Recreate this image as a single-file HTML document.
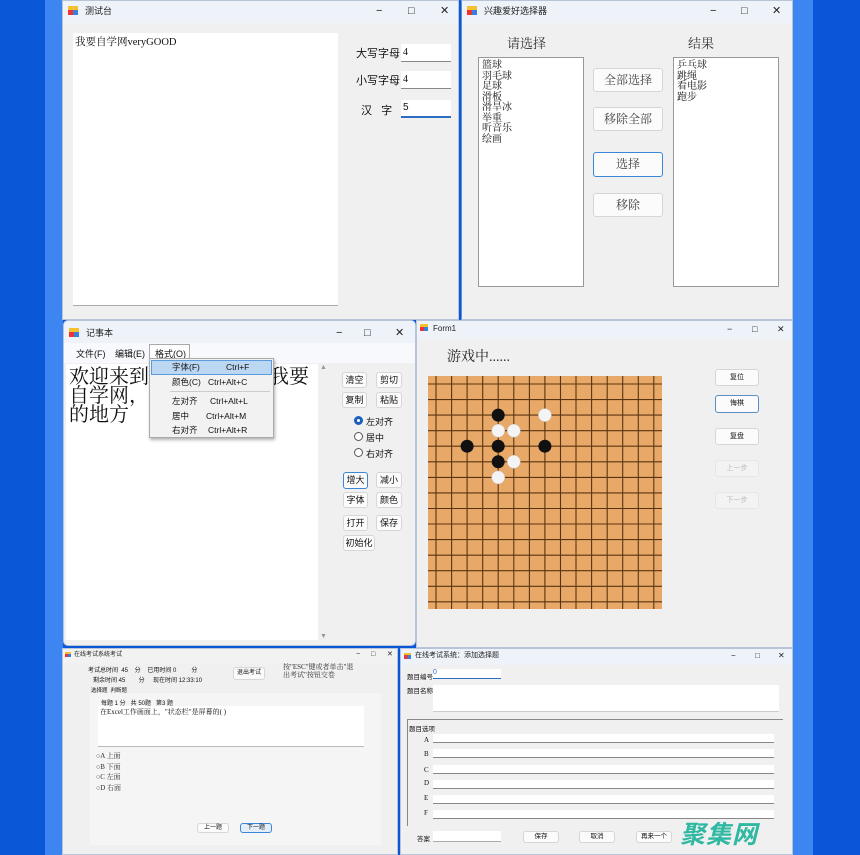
<!DOCTYPE html>
<html><head><meta charset="utf-8"><style>
*{box-sizing:border-box;margin:0;padding:0}
body{width:860px;height:855px;position:relative;overflow:hidden;background:#0a58d8;font-family:"Liberation Sans","Noto Sans CJK SC",sans-serif;font-size:11px;color:#111}
.a{position:absolute}
.win{position:absolute;background:#f0f0f0;border:1px solid #b8c4d8;overflow:hidden}
.tb{position:absolute;left:0;right:0;top:0;height:22px;background:#eef2f9;font-size:9px;line-height:20px;padding-left:22px;color:#222}
.ic{position:absolute;left:5px;top:5px;width:10px;height:9px;background:linear-gradient(90deg,#e33 0 50%,#3a7fe0 50%);border-top:4px solid #f5c030}
.ctl{position:absolute;top:0;font-size:11px;line-height:20px;color:#222}
.serif{font-family:"Liberation Serif","Noto Serif CJK SC",serif}
.wb{position:absolute;background:#fff}
.btn{position:absolute;background:#fbfbfb;border:1px solid #d6d6d6;border-radius:3px;text-align:center;font-size:9px}
.line{position:absolute;background:#fff;border-bottom:1px solid #888}
</style></head><body>
<div class="a" style="left:0;top:0;width:45px;height:855px;background:#0a58d8"></div>
<div class="a" style="left:45px;top:0;width:18px;height:855px;background:#3d86f2"></div>
<div class="a" style="left:793px;top:0;width:20px;height:855px;background:#3d86f2"></div>
<div class="a" style="left:813px;top:0;width:47px;height:855px;background:#0a55d8"></div>

<!-- Window 1 -->
<div class="win" style="left:62px;top:0;width:397px;height:320px">
 <div class="tb"><div class="ic"></div>测试台<span class="ctl" style="left:313px">−</span><span class="ctl" style="left:345px">□</span><span class="ctl" style="left:377px">✕</span></div>
 <div class="wb serif" style="left:10px;top:32px;width:265px;height:273px;border-bottom:1px solid #aaa;font-size:10.5px;padding:1px 2px">我要自学网veryGOOD</div>
 <div class="a" style="left:293px;top:44px;font-size:11px">大写字母</div>
 <div class="line serif" style="left:338px;top:43px;width:50px;height:18px;padding:3px 0 0 2px;font-size:10px">4</div>
 <div class="a" style="left:293px;top:71px;font-size:11px">小写字母</div>
 <div class="line serif" style="left:338px;top:70px;width:50px;height:18px;padding:3px 0 0 2px;font-size:10px">4</div>
 <div class="a" style="left:298px;top:101px;font-size:11px">汉&nbsp;&nbsp;&nbsp;字</div>
 <div class="line" style="left:338px;top:99px;width:50px;height:18px;padding:2px 0 0 2px;font-size:10px;border-bottom:2px solid #2b6cc4">5</div>
</div>

<!-- Window 2 -->
<div class="win" style="left:461px;top:0;width:332px;height:320px;border-left:1px solid #5a8ee0">
 <div class="tb"><div class="ic"></div>兴趣爱好选择器<span class="ctl" style="left:248px">−</span><span class="ctl" style="left:279px">□</span><span class="ctl" style="left:310px">✕</span></div>
 <div class="a serif" style="left:45px;top:32px;font-size:13px;color:#333">请选择</div>
 <div class="a serif" style="left:226px;top:32px;font-size:13px;color:#333">结果</div>
 <div class="wb serif" style="left:16px;top:56px;width:106px;height:230px;border:1px solid #999;font-size:10px;line-height:10.5px;padding:3px">篮球<br>羽毛球<br>足球<br>滑板<br>滑旱冰<br>举重<br>听音乐<br>绘画</div>
 <div class="wb serif" style="left:211px;top:56px;width:106px;height:230px;border:1px solid #999;font-size:10px;line-height:10.5px;padding:3px">乒乓球<br>跳绳<br>看电影<br>跑步</div>
 <div class="btn serif" style="left:131px;top:67px;width:70px;height:24px;line-height:22px;font-size:12px;color:#444">全部选择</div>
 <div class="btn serif" style="left:131px;top:106px;width:70px;height:24px;line-height:22px;font-size:12px;color:#444">移除全部</div>
 <div class="btn serif" style="left:131px;top:151px;width:70px;height:25px;line-height:23px;font-size:12px;color:#444;border:1px solid #3a86d8">选择</div>
 <div class="btn serif" style="left:131px;top:192px;width:70px;height:24px;line-height:22px;font-size:12px;color:#444">移除</div>
</div>

<!-- Notepad -->
<div class="win" style="left:63px;top:320px;width:353px;height:326px;border-radius:5px">
 <div class="tb" style="height:24px;line-height:24px"><div class="ic" style="top:7px"></div>记事本<span class="ctl" style="left:272px;line-height:24px">−</span><span class="ctl" style="left:300px;line-height:24px">□</span><span class="ctl" style="left:331px;line-height:24px">✕</span></div>
 <div class="a" style="left:0;top:22px;width:353px;height:20px;background:#f7f9fc"></div>
 <div class="a" style="left:12px;top:26px;font-size:9px">文件(F)</div>
 <div class="a" style="left:51px;top:26px;font-size:9px">编辑(E)</div>
 <div class="a" style="left:85px;top:23px;width:41px;height:16px;border:1px solid #aaa;background:#fff;font-size:9px;padding:2px 0 0 5px">格式(O)</div>
 <div class="wb serif" style="left:2px;top:43px;width:252px;height:276px;font-size:20px;line-height:19px;padding:4px 3px">欢迎来到我要自学网，我要<br>自学网，学习玩电<br>的地方</div>
 <div class="a" style="left:254px;top:43px;width:11px;height:276px;background:#f0f0f0;font-size:7px;color:#999;text-align:center">▲<div style="position:absolute;bottom:0;width:11px">▼</div></div>
 <div class="a" style="left:85px;top:37px;width:125px;height:80px;background:#f2f2f2;border:1px solid #aaa;box-shadow:1px 2px 3px rgba(0,0,0,.3);font-size:8.5px;line-height:10px">
  <div class="a" style="left:1px;top:1px;width:121px;height:15px;background:#bcd7f2;border:1px solid #5a9ade"></div>
  <div class="a" style="left:22px;top:3px">字体(F)</div><div class="a" style="left:76px;top:3px">Ctrl+F</div>
  <div class="a" style="left:22px;top:18px">颜色(C)</div><div class="a" style="left:58px;top:18px">Ctrl+Alt+C</div>
  <div class="a" style="left:20px;top:32px;width:100px;height:1px;background:#ccc"></div>
  <div class="a" style="left:22px;top:37px">左对齐</div><div class="a" style="left:60px;top:37px">Ctrl+Alt+L</div>
  <div class="a" style="left:22px;top:52px">居中</div><div class="a" style="left:56px;top:52px">Ctrl+Alt+M</div>
  <div class="a" style="left:22px;top:66px">右对齐</div><div class="a" style="left:58px;top:66px">Ctrl+Alt+R</div>
 </div>
 <div class="btn" style="left:278px;top:51px;width:25px;height:16px;line-height:14px">清空</div>
 <div class="btn" style="left:312px;top:51px;width:26px;height:16px;line-height:14px">剪切</div>
 <div class="btn" style="left:278px;top:71px;width:25px;height:16px;line-height:14px">复制</div>
 <div class="btn" style="left:312px;top:71px;width:26px;height:16px;line-height:14px">粘贴</div>
 <div class="a" style="left:290px;top:95px;width:9px;height:9px;border-radius:50%;border:3px solid #1a5fc0;background:#fff"></div><div class="a" style="left:302px;top:94px;font-size:9px">左对齐</div>
 <div class="a" style="left:290px;top:111px;width:9px;height:9px;border-radius:50%;border:1px solid #555;background:#fff"></div><div class="a" style="left:302px;top:110px;font-size:9px">居中</div>
 <div class="a" style="left:290px;top:127px;width:9px;height:9px;border-radius:50%;border:1px solid #555;background:#fff"></div><div class="a" style="left:302px;top:126px;font-size:9px">右对齐</div>
 <div class="btn" style="left:279px;top:151px;width:25px;height:17px;line-height:15px;border-color:#3a86d8">增大</div>
 <div class="btn" style="left:312px;top:151px;width:26px;height:16px;line-height:14px">减小</div>
 <div class="btn" style="left:279px;top:171px;width:25px;height:16px;line-height:14px">字体</div>
 <div class="btn" style="left:312px;top:171px;width:26px;height:16px;line-height:14px">颜色</div>
 <div class="btn" style="left:279px;top:194px;width:25px;height:16px;line-height:14px">打开</div>
 <div class="btn" style="left:312px;top:194px;width:26px;height:16px;line-height:14px">保存</div>
 <div class="btn" style="left:279px;top:214px;width:32px;height:16px;line-height:14px">初始化</div>
</div>

<!-- Form1 -->
<div class="win" style="left:416px;top:320px;width:377px;height:328px">
 <div class="tb" style="height:18px;line-height:16px;font-size:8px;padding-left:16px"><div class="ic" style="left:3px;top:3px;width:8px;height:7px;border-top-width:3px"></div>Form1<span class="ctl" style="left:310px;line-height:16px;font-size:9px">−</span><span class="ctl" style="left:335px;line-height:16px;font-size:9px">□</span><span class="ctl" style="left:360px;line-height:16px;font-size:9px">✕</span></div>
 <div class="a serif" style="left:30px;top:25px;font-size:14px;color:#222">游戏中......</div>
 <svg class="a" style="left:11px;top:55px" width="234" height="233" viewBox="0 0 234 233">
  <rect width="234" height="233" fill="#e8a868"/>
  <g stroke="#5a3410" stroke-width="1.1">
   <line x1="8" y1="0" x2="8" y2="233"/><line x1="23.6" y1="0" x2="23.6" y2="233"/><line x1="39.1" y1="0" x2="39.1" y2="233"/><line x1="54.7" y1="0" x2="54.7" y2="233"/><line x1="70.2" y1="0" x2="70.2" y2="233"/><line x1="85.8" y1="0" x2="85.8" y2="233"/><line x1="101.4" y1="0" x2="101.4" y2="233"/><line x1="116.9" y1="0" x2="116.9" y2="233"/><line x1="132.5" y1="0" x2="132.5" y2="233"/><line x1="148" y1="0" x2="148" y2="233"/><line x1="163.6" y1="0" x2="163.6" y2="233"/><line x1="179.2" y1="0" x2="179.2" y2="233"/><line x1="194.7" y1="0" x2="194.7" y2="233"/><line x1="210.3" y1="0" x2="210.3" y2="233"/><line x1="225.8" y1="0" x2="225.8" y2="233"/>
   <line y1="8" x1="0" y2="8" x2="234"/><line y1="23.6" x1="0" y2="23.6" x2="234"/><line y1="39.1" x1="0" y2="39.1" x2="234"/><line y1="54.7" x1="0" y2="54.7" x2="234"/><line y1="70.2" x1="0" y2="70.2" x2="234"/><line y1="85.8" x1="0" y2="85.8" x2="234"/><line y1="101.4" x1="0" y2="101.4" x2="234"/><line y1="116.9" x1="0" y2="116.9" x2="234"/><line y1="132.5" x1="0" y2="132.5" x2="234"/><line y1="148" x1="0" y2="148" x2="234"/><line y1="163.6" x1="0" y2="163.6" x2="234"/><line y1="179.2" x1="0" y2="179.2" x2="234"/><line y1="194.7" x1="0" y2="194.7" x2="234"/><line y1="210.3" x1="0" y2="210.3" x2="234"/><line y1="225.8" x1="0" y2="225.8" x2="234"/>
  </g>
  <g fill="#111"><circle cx="70.2" cy="39.1" r="6.5"/><circle cx="70.2" cy="70.2" r="6.5"/><circle cx="70.2" cy="85.8" r="6.5"/><circle cx="39.1" cy="70.2" r="6.5"/><circle cx="116.9" cy="70.2" r="6.5"/></g>
  <g fill="#f4f4f4" stroke="#ccc" stroke-width=".5"><circle cx="116.9" cy="39.1" r="6.5"/><circle cx="70.2" cy="54.7" r="6.5"/><circle cx="85.8" cy="54.7" r="6.5"/><circle cx="85.8" cy="85.8" r="6.5"/><circle cx="70.2" cy="101.4" r="6.5"/></g>
 </svg>
 <div class="btn" style="left:298px;top:48px;width:44px;height:17px;line-height:15px;font-size:7px">复位</div>
 <div class="btn" style="left:298px;top:74px;width:44px;height:18px;line-height:16px;font-size:7px;border-color:#5a8ec8">悔棋</div>
 <div class="btn" style="left:298px;top:107px;width:44px;height:17px;line-height:15px;font-size:7px">复盘</div>
 <div class="btn" style="left:298px;top:139px;width:44px;height:17px;line-height:15px;font-size:7px;color:#bbb;background:#f3f3f3;border-color:#e6e6e6">上一步</div>
 <div class="btn" style="left:298px;top:171px;width:44px;height:17px;line-height:15px;font-size:7px;color:#bbb;background:#f3f3f3;border-color:#e6e6e6">下一步</div>
</div>

<!-- Exam -->
<div class="win" style="left:62px;top:648px;width:336px;height:207px">
 <div class="tb" style="height:14px;line-height:12px;font-size:6px;padding-left:11px;background:#f2f2f2"><div class="ic" style="left:2px;top:3px;width:6px;height:5px;border-top-width:2px"></div>在线考试系统考试<span class="ctl" style="left:293px;line-height:12px;font-size:7px">−</span><span class="ctl" style="left:308px;line-height:12px;font-size:7px">□</span><span class="ctl" style="left:324px;line-height:12px;font-size:7px">✕</span></div>
 <div class="a" style="font-size:6px;left:25px;top:16px">考试总时间 &nbsp;45 &nbsp;&nbsp;&nbsp;分 &nbsp;&nbsp;&nbsp;已用时间 0 &nbsp;&nbsp;&nbsp;&nbsp;&nbsp;&nbsp;&nbsp;&nbsp;分</div>
 <div class="a" style="font-size:6px;left:30px;top:26px">剩余时间 45 &nbsp;&nbsp;&nbsp;&nbsp;&nbsp;&nbsp;&nbsp;分 &nbsp;&nbsp;&nbsp;&nbsp;现在时间 12:33:10</div>
 <div class="btn" style="left:170px;top:18px;width:32px;height:13px;line-height:11px;font-size:6px">退出考试</div>
 <div class="a serif" style="left:220px;top:14px;font-size:7px;line-height:8px;color:#333">按"ESC"键或者单击"退<br>出考试"按钮交卷</div>
 <div class="a" style="font-size:5.5px;left:28px;top:37px">选择题 &nbsp;判断题</div>
 <div class="a" style="left:27px;top:44px;width:291px;height:152px;background:#f5f5f5"></div>
 <div class="a" style="font-size:6px;left:38px;top:49px">每题 1 分 &nbsp;&nbsp;共 50题 &nbsp;&nbsp;第3 题</div>
 <div class="wb serif" style="left:35px;top:57px;width:266px;height:41px;font-size:7px;padding:1px 2px;border-bottom:1px solid #bbb">在Excel工作画面上，"状态栏"是屏幕的(  )</div>
 <div class="a serif" style="left:33px;top:102px;font-size:7px;line-height:10.5px;color:#333">○A 上面<br>○B 下面<br>○C 左面<br>○D 右面</div>
 <div class="btn" style="left:134px;top:174px;width:32px;height:10px;line-height:8px;font-size:6px">上一题</div>
 <div class="btn" style="left:177px;top:174px;width:32px;height:10px;line-height:8px;font-size:6px;border-color:#3a86d8;background:#e4eefa">下一题</div>
</div>

<!-- Add question -->
<div class="win" style="left:400px;top:648px;width:393px;height:207px">
 <div class="tb" style="height:16px;line-height:14px;font-size:7px;padding-left:14px"><div class="ic" style="left:3px;top:4px;width:7px;height:6px;border-top-width:2px"></div>在线考试系统：添加选择题<span class="ctl" style="left:330px;line-height:14px;font-size:8px">−</span><span class="ctl" style="left:354px;line-height:14px;font-size:8px">□</span><span class="ctl" style="left:377px;line-height:14px;font-size:8px">✕</span></div>
 <div class="a" style="font-size:6.5px;left:6px;top:22px">题目编号</div>
 <div class="line" style="left:32px;top:20px;width:68px;height:10px;border-bottom:1px solid #2b6cc4;font-size:7px;line-height:8px;color:#2b6cc4">0</div>
 <div class="a" style="font-size:6.5px;left:6px;top:36px">题目名称</div>
 <div class="wb" style="left:32px;top:36px;width:346px;height:27px;border-bottom:1px solid #ccc"></div>
 <div class="a" style="left:6px;top:70px;width:376px;height:136px;border:1px solid #888;border-bottom:none;border-right:none"></div>
 <div class="a" style="font-size:6.5px;left:8px;top:74px">题目选项</div>
 <div class="a serif" style="font-size:7px;left:23px;top:87px">A</div>
 <div class="a serif" style="font-size:7px;left:23px;top:101px">B</div>
 <div class="a serif" style="font-size:7px;left:23px;top:117px">C</div>
 <div class="a serif" style="font-size:7px;left:23px;top:130px">D</div>
 <div class="a serif" style="font-size:7px;left:23px;top:145px">E</div>
 <div class="a serif" style="font-size:7px;left:23px;top:160px">F</div>
 <div class="line" style="left:32px;top:85px;width:341px;height:9px"></div>
 <div class="line" style="left:32px;top:100px;width:341px;height:9px"></div>
 <div class="line" style="left:32px;top:116px;width:341px;height:9px"></div>
 <div class="line" style="left:32px;top:131px;width:341px;height:9px"></div>
 <div class="line" style="left:32px;top:146px;width:341px;height:9px"></div>
 <div class="line" style="left:32px;top:161px;width:341px;height:9px"></div>
 <div class="a" style="left:0;top:177px;width:393px;height:30px;background:#f0f0f0"></div>
 <div class="a" style="font-size:6.5px;left:16px;top:184px">答案</div>
 <div class="wb" style="left:32px;top:182px;width:68px;height:11px;border-bottom:1px solid #aaa"></div>
 <div class="btn" style="left:122px;top:182px;width:36px;height:12px;line-height:10px;font-size:6.5px">保存</div>
 <div class="btn" style="left:178px;top:182px;width:36px;height:12px;line-height:10px;font-size:6.5px">取消</div>
 <div class="btn" style="left:235px;top:182px;width:36px;height:12px;line-height:10px;font-size:6.5px">再来一个</div>
 <div class="a" style="left:279px;top:166px;font-size:25px;font-weight:bold;font-style:italic;color:#2fb8a2;letter-spacing:1px;font-family:'Noto Sans CJK SC',sans-serif">聚集网</div>
</div>
</body></html>
